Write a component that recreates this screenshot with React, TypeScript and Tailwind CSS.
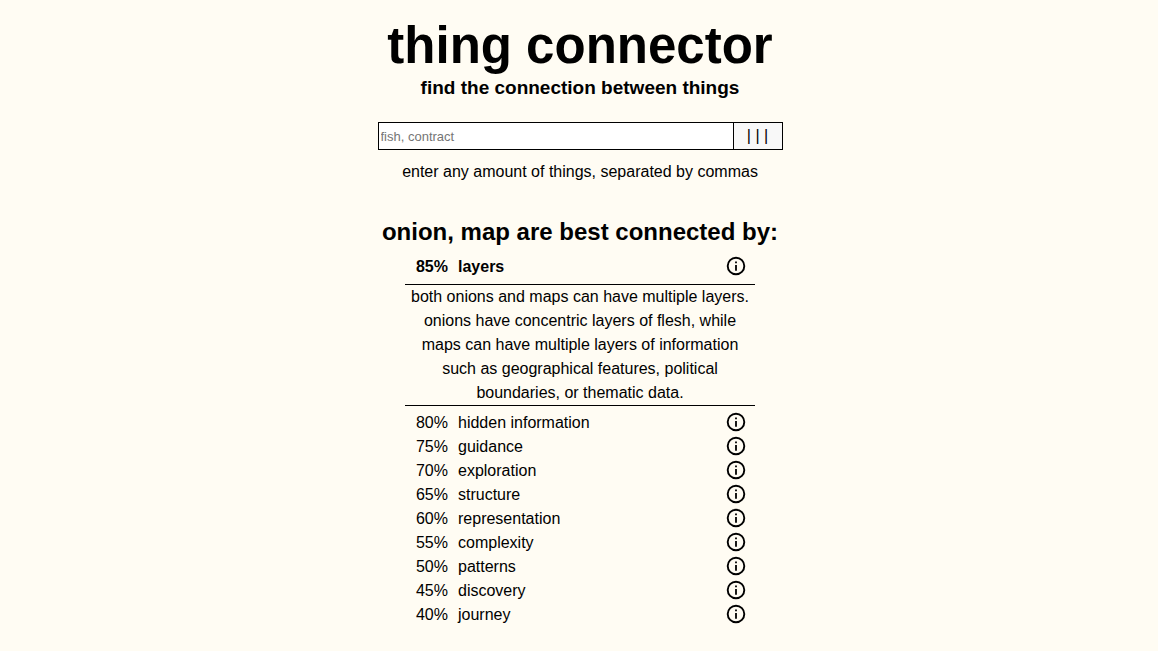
import { useState } from "react";

type Connection = { score: number; label: string; detail: string };

const connections: Connection[] = [
  {
    score: 85,
    label: "layers",
    detail:
      "both onions and maps can have multiple layers. onions have concentric layers of flesh, while maps can have multiple layers of information such as geographical features, political boundaries, or thematic data.",
  },
  { score: 80, label: "hidden information", detail: "both conceal information beneath the surface." },
  { score: 75, label: "guidance", detail: "both can guide you along the way." },
  { score: 70, label: "exploration", detail: "both invite exploration." },
  { score: 65, label: "structure", detail: "both have an organised structure." },
  { score: 60, label: "representation", detail: "both can represent something larger." },
  { score: 55, label: "complexity", detail: "both are more complex than they look." },
  { score: 50, label: "patterns", detail: "both show recurring patterns." },
  { score: 45, label: "discovery", detail: "both lead to discovery." },
  { score: 40, label: "journey", detail: "both can be part of a journey." },
];

function InfoIcon() {
  return (
    <svg viewBox="0 0 24 24" className="size-6" aria-hidden="true">
      <circle cx="12" cy="11" r="8.3" fill="none" stroke="#000" strokeWidth="1.9" />
      <path d="M12 10v5.7M12 6.4v1.8" stroke="#000" strokeWidth="1.8" />
    </svg>
  );
}

export default function App() {
  const [things, setThings] = useState("");
  const [open, setOpen] = useState(0);

  return (
    <main className="flex min-h-screen flex-col items-center bg-[#fffcf3] pt-4 pr-4 pl-[18px] font-['Liberation_Sans',Arial,sans-serif] text-base text-black">
      <h1 className="text-center text-[51px] leading-[60px] font-bold">thing connector</h1>
      <h2 className="text-center text-[19px] leading-6 font-bold">find the connection between things</h2>
      <form className="mt-[22px] flex h-7 w-full max-w-[405px]" onSubmit={(e) => e.preventDefault()}>
        <input
          type="text"
          aria-label="things to connect"
          value={things}
          onChange={(e) => setThings(e.target.value)}
          placeholder="fish, contract"
          className="min-w-0 flex-1 border border-black bg-white px-0.5 pt-px text-[13px] placeholder:text-[#757575]"
        />
        <button type="submit" aria-label="connect" className="w-[49px] border border-l-0 border-black bg-[#f8f8f8]">
          | | |
        </button>
      </form>
      <p className="mt-[10px] text-center leading-6">enter any amount of things, separated by commas</p>
      <h2 className="mt-[30px] text-center text-2xl leading-9 font-bold">onion, map are best connected by:</h2>
      <ul className="mt-[5px] w-full max-w-[350px]">
        {connections.map((item, i) => (
          <li key={item.label}>
            <div className={i === 0 ? "flex font-bold" : "flex"}>
              <span className="w-[43px] text-right">{item.score}%</span>
              <span className="ml-[10px] flex-1">{item.label}</span>
              <button
                type="button"
                aria-label={`about ${item.label}`}
                aria-expanded={open === i}
                onClick={() => setOpen(open === i ? -1 : i)}
                className="mr-[7px] size-6"
              >
                <InfoIcon />
              </button>
            </div>
            {open === i && (
              <p className="my-[5px] border-y border-black px-1 text-center">{item.detail}</p>
            )}
          </li>
        ))}
      </ul>
    </main>
  );
}
